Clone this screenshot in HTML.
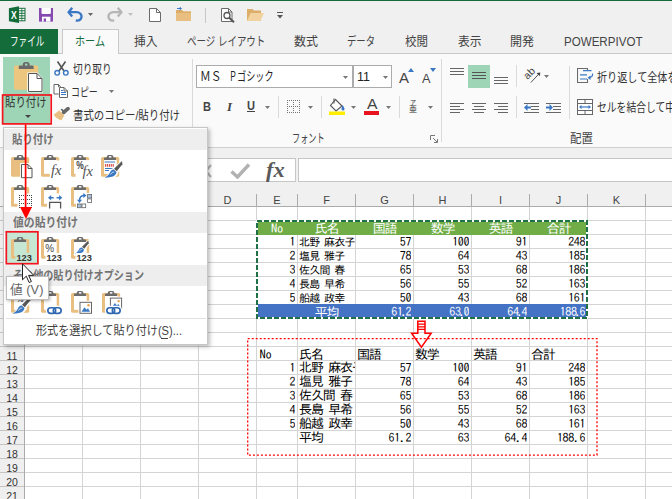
<!DOCTYPE html>
<html lang="ja"><head><meta charset="utf-8"><title>Excel</title>
<style>
*{box-sizing:border-box;margin:0;padding:0}
html,body{width:672px;height:499px;overflow:hidden;background:#fff}
body{position:relative;font-family:"Liberation Sans","Noto Sans CJK JP",sans-serif;font-size:12px;color:#444}
.a{position:absolute}
.t{position:absolute;white-space:nowrap;line-height:1}
.ui{font-family:"Liberation Sans","Noto Sans CJK JP",sans-serif;letter-spacing:-0.6px}
.cell{position:absolute;white-space:nowrap;line-height:14px;height:14px;font-family:"IPAPGothic","IPAGothic","Noto Sans CJK JP",sans-serif;font-size:12px;color:#000;overflow:hidden}
.r{text-align:right;font-family:"IPAGothic","Noto Sans CJK JP",monospace;font-size:12px;letter-spacing:-0.4px;margin-top:-1px}
.c{text-align:center}
.dot{margin:0 -1.4px}
.h{font-family:"IPAGothic","Noto Sans CJK JP",monospace;font-size:13px;letter-spacing:-1.2px}
.h.no{font-size:12.5px;letter-spacing:-0.2px}
.vl{position:absolute;width:1px;background:#d4d4d4}
.hl{position:absolute;height:1px;background:#d4d4d4}
.hd{position:absolute;font-family:"Liberation Sans",sans-serif;font-size:11px;color:#444;text-align:center;line-height:14px}
</style></head><body>

<div class="a" style="left:0;top:183px;width:672px;height:24px;background:#f0f0f0"></div>
<div class="a" style="left:0;top:207px;width:24px;height:292px;background:#efefef"></div>
<div class="hl" style="left:0;top:206px;width:672px;background:#ababab"></div>
<div class="vl" style="left:24px;top:191px;height:308px;background:#ababab"></div>
<div class="vl" style="left:82px;top:207px;height:292px"></div>
<div class="vl" style="left:82px;top:194px;height:12px;background:#ababab"></div>
<div class="vl" style="left:140px;top:207px;height:292px"></div>
<div class="vl" style="left:140px;top:194px;height:12px;background:#ababab"></div>
<div class="vl" style="left:198px;top:207px;height:292px"></div>
<div class="vl" style="left:198px;top:194px;height:12px;background:#ababab"></div>
<div class="vl" style="left:256px;top:207px;height:292px"></div>
<div class="vl" style="left:256px;top:194px;height:12px;background:#ababab"></div>
<div class="vl" style="left:297px;top:207px;height:292px"></div>
<div class="vl" style="left:297px;top:194px;height:12px;background:#ababab"></div>
<div class="vl" style="left:355px;top:207px;height:292px"></div>
<div class="vl" style="left:355px;top:194px;height:12px;background:#ababab"></div>
<div class="vl" style="left:413px;top:207px;height:292px"></div>
<div class="vl" style="left:413px;top:194px;height:12px;background:#ababab"></div>
<div class="vl" style="left:471px;top:207px;height:292px"></div>
<div class="vl" style="left:471px;top:194px;height:12px;background:#ababab"></div>
<div class="vl" style="left:529px;top:207px;height:292px"></div>
<div class="vl" style="left:529px;top:194px;height:12px;background:#ababab"></div>
<div class="vl" style="left:587px;top:207px;height:292px"></div>
<div class="vl" style="left:587px;top:194px;height:12px;background:#ababab"></div>
<div class="vl" style="left:645px;top:207px;height:292px"></div>
<div class="vl" style="left:645px;top:194px;height:12px;background:#ababab"></div>
<div class="hl" style="left:0;top:220px;width:24px;background:#c4c4c4"></div><div class="hl" style="left:25px;top:220px;width:647px"></div>
<div class="hl" style="left:0;top:234px;width:24px;background:#c4c4c4"></div><div class="hl" style="left:25px;top:234px;width:647px"></div>
<div class="hl" style="left:0;top:248px;width:24px;background:#c4c4c4"></div><div class="hl" style="left:25px;top:248px;width:647px"></div>
<div class="hl" style="left:0;top:262px;width:24px;background:#c4c4c4"></div><div class="hl" style="left:25px;top:262px;width:647px"></div>
<div class="hl" style="left:0;top:276px;width:24px;background:#c4c4c4"></div><div class="hl" style="left:25px;top:276px;width:647px"></div>
<div class="hl" style="left:0;top:290px;width:24px;background:#c4c4c4"></div><div class="hl" style="left:25px;top:290px;width:647px"></div>
<div class="hl" style="left:0;top:304px;width:24px;background:#c4c4c4"></div><div class="hl" style="left:25px;top:304px;width:647px"></div>
<div class="hl" style="left:0;top:318px;width:24px;background:#c4c4c4"></div><div class="hl" style="left:25px;top:318px;width:647px"></div>
<div class="hl" style="left:0;top:332px;width:24px;background:#c4c4c4"></div><div class="hl" style="left:25px;top:332px;width:647px"></div>
<div class="hl" style="left:0;top:346px;width:24px;background:#c4c4c4"></div><div class="hl" style="left:25px;top:346px;width:647px"></div>
<div class="hl" style="left:0;top:360px;width:24px;background:#c4c4c4"></div><div class="hl" style="left:25px;top:360px;width:647px"></div>
<div class="hl" style="left:0;top:374px;width:24px;background:#c4c4c4"></div><div class="hl" style="left:25px;top:374px;width:647px"></div>
<div class="hl" style="left:0;top:388px;width:24px;background:#c4c4c4"></div><div class="hl" style="left:25px;top:388px;width:647px"></div>
<div class="hl" style="left:0;top:402px;width:24px;background:#c4c4c4"></div><div class="hl" style="left:25px;top:402px;width:647px"></div>
<div class="hl" style="left:0;top:416px;width:24px;background:#c4c4c4"></div><div class="hl" style="left:25px;top:416px;width:647px"></div>
<div class="hl" style="left:0;top:430px;width:24px;background:#c4c4c4"></div><div class="hl" style="left:25px;top:430px;width:647px"></div>
<div class="hl" style="left:0;top:444px;width:24px;background:#c4c4c4"></div><div class="hl" style="left:25px;top:444px;width:647px"></div>
<div class="hl" style="left:0;top:458px;width:24px;background:#c4c4c4"></div><div class="hl" style="left:25px;top:458px;width:647px"></div>
<div class="hl" style="left:0;top:472px;width:24px;background:#c4c4c4"></div><div class="hl" style="left:25px;top:472px;width:647px"></div>
<div class="hl" style="left:0;top:486px;width:24px;background:#c4c4c4"></div><div class="hl" style="left:25px;top:486px;width:647px"></div>
<div class="hd" style="left:25px;top:193px;width:57px">A</div>
<div class="hd" style="left:83px;top:193px;width:57px">B</div>
<div class="hd" style="left:141px;top:193px;width:57px">C</div>
<div class="hd" style="left:199px;top:193px;width:57px">D</div>
<div class="hd" style="left:257px;top:193px;width:40px">E</div>
<div class="hd" style="left:298px;top:193px;width:57px">F</div>
<div class="hd" style="left:356px;top:193px;width:57px">G</div>
<div class="hd" style="left:414px;top:193px;width:57px">H</div>
<div class="hd" style="left:472px;top:193px;width:57px">I</div>
<div class="hd" style="left:530px;top:193px;width:57px">J</div>
<div class="hd" style="left:588px;top:193px;width:57px">K</div>
<div class="hd" style="left:0;top:348.5px;width:24px;font-size:10.5px;color:#333">11</div>
<div class="hd" style="left:0;top:362.5px;width:24px;font-size:10.5px;color:#333">12</div>
<div class="hd" style="left:0;top:376.5px;width:24px;font-size:10.5px;color:#333">13</div>
<div class="hd" style="left:0;top:390.5px;width:24px;font-size:10.5px;color:#333">14</div>
<div class="hd" style="left:0;top:404.5px;width:24px;font-size:10.5px;color:#333">15</div>
<div class="hd" style="left:0;top:418.5px;width:24px;font-size:10.5px;color:#333">16</div>
<div class="hd" style="left:0;top:432.5px;width:24px;font-size:10.5px;color:#333">17</div>
<div class="hd" style="left:0;top:446.5px;width:24px;font-size:10.5px;color:#333">18</div>
<div class="hd" style="left:0;top:460.5px;width:24px;font-size:10.5px;color:#333">19</div>
<div class="hd" style="left:0;top:474.5px;width:24px;font-size:10.5px;color:#333">20</div>
<div class="hd" style="left:0;top:488.5px;width:24px;font-size:10.5px;color:#333">21</div>
<div class="a" style="left:256px;top:220px;width:332px;height:15px;background:#70ad47"></div>
<div class="a" style="left:256px;top:304px;width:332px;height:15px;background:#4472c4"></div>
<div class="cell c h no" style="left:257px;top:221.5px;width:40px;color:#fff">No</div>
<div class="cell c h" style="left:298px;top:221.5px;width:57px;color:#fff">氏名</div>
<div class="cell c h" style="left:356px;top:221.5px;width:57px;color:#fff">国語</div>
<div class="cell c h" style="left:414px;top:221.5px;width:57px;color:#fff">数学</div>
<div class="cell c h" style="left:472px;top:221.5px;width:57px;color:#fff">英語</div>
<div class="cell c h" style="left:530px;top:221.5px;width:57px;color:#fff">合計</div>
<div class="cell r" style="left:257px;top:235px;width:38px">1</div>
<div class="cell" style="left:299px;top:235px;width:57px;font-family:IPAGothic,monospace;font-size:11px;letter-spacing:-0.8px">北野 麻衣子</div>
<div class="cell r" style="left:356px;top:235px;width:55px">57</div>
<div class="cell r" style="left:414px;top:235px;width:55px">100</div>
<div class="cell r" style="left:472px;top:235px;width:55px">91</div>
<div class="cell r" style="left:530px;top:235px;width:55px">248</div>
<div class="cell r" style="left:257px;top:249px;width:38px">2</div>
<div class="cell" style="left:299px;top:249px;width:57px;font-family:IPAGothic,monospace;font-size:11px;letter-spacing:-0.8px">塩見 雅子</div>
<div class="cell r" style="left:356px;top:249px;width:55px">78</div>
<div class="cell r" style="left:414px;top:249px;width:55px">64</div>
<div class="cell r" style="left:472px;top:249px;width:55px">43</div>
<div class="cell r" style="left:530px;top:249px;width:55px">185</div>
<div class="cell r" style="left:257px;top:263px;width:38px">3</div>
<div class="cell" style="left:299px;top:263px;width:57px;font-family:IPAGothic,monospace;font-size:11px;letter-spacing:-0.8px">佐久間 春</div>
<div class="cell r" style="left:356px;top:263px;width:55px">65</div>
<div class="cell r" style="left:414px;top:263px;width:55px">53</div>
<div class="cell r" style="left:472px;top:263px;width:55px">68</div>
<div class="cell r" style="left:530px;top:263px;width:55px">186</div>
<div class="cell r" style="left:257px;top:277px;width:38px">4</div>
<div class="cell" style="left:299px;top:277px;width:57px;font-family:IPAGothic,monospace;font-size:11px;letter-spacing:-0.8px">長島 早希</div>
<div class="cell r" style="left:356px;top:277px;width:55px">56</div>
<div class="cell r" style="left:414px;top:277px;width:55px">55</div>
<div class="cell r" style="left:472px;top:277px;width:55px">52</div>
<div class="cell r" style="left:530px;top:277px;width:55px">163</div>
<div class="cell r" style="left:257px;top:291px;width:38px">5</div>
<div class="cell" style="left:299px;top:291px;width:57px;font-family:IPAGothic,monospace;font-size:11px;letter-spacing:-0.8px">船越 政幸</div>
<div class="cell r" style="left:356px;top:291px;width:55px">50</div>
<div class="cell r" style="left:414px;top:291px;width:55px">43</div>
<div class="cell r" style="left:472px;top:291px;width:55px">68</div>
<div class="cell r" style="left:530px;top:291px;width:55px">161</div>
<div class="cell c h" style="left:298px;top:305.5px;width:57px;color:#fff">平均</div>
<div class="cell r" style="left:356px;top:305px;width:55px;color:#fff">61<span class="dot">.</span>2</div>
<div class="cell r" style="left:414px;top:305px;width:55px;color:#fff">63<span class="dot">.</span>0</div>
<div class="cell r" style="left:472px;top:305px;width:55px;color:#fff">64<span class="dot">.</span>4</div>
<div class="cell r" style="left:530px;top:305px;width:55px;color:#fff">188<span class="dot">.</span>6</div>
<svg class="a" style="left:250px;top:214px" width="345" height="112" viewBox="0 0 345 112">
<rect x="7" y="7" width="330" height="97" fill="none" stroke="#fff" stroke-width="2"/>
<rect x="7" y="7" width="330" height="97" fill="none" stroke="#1f7145" stroke-width="2" stroke-dasharray="5 2" shape-rendering="crispEdges"/>
</svg>
<div class="cell h no" style="left:259.5px;top:348px;width:43px;overflow:visible">No</div>
<div class="cell h" style="left:299px;top:348px;width:60px;overflow:visible">氏名</div>
<div class="cell h" style="left:357px;top:348px;width:60px;overflow:visible">国語</div>
<div class="cell h" style="left:415px;top:348px;width:60px;overflow:visible">数学</div>
<div class="cell h" style="left:473px;top:348px;width:60px;overflow:visible">英語</div>
<div class="cell h" style="left:531px;top:348px;width:60px;overflow:visible">合計</div>
<div class="cell r" style="left:257px;top:361px;width:38px">1</div>
<div class="cell" style="left:299px;top:360.5px;width:56px;font-family:IPAGothic,monospace;font-size:13px;letter-spacing:-1.1px">北野 麻衣子</div>
<div class="cell r" style="left:356px;top:361px;width:55px">57</div>
<div class="cell r" style="left:414px;top:361px;width:55px">100</div>
<div class="cell r" style="left:472px;top:361px;width:55px">91</div>
<div class="cell r" style="left:530px;top:361px;width:55px">248</div>
<div class="cell r" style="left:257px;top:375px;width:38px">2</div>
<div class="cell" style="left:299px;top:374.5px;width:56px;font-family:IPAGothic,monospace;font-size:13px;letter-spacing:-1.1px">塩見 雅子</div>
<div class="cell r" style="left:356px;top:375px;width:55px">78</div>
<div class="cell r" style="left:414px;top:375px;width:55px">64</div>
<div class="cell r" style="left:472px;top:375px;width:55px">43</div>
<div class="cell r" style="left:530px;top:375px;width:55px">185</div>
<div class="cell r" style="left:257px;top:389px;width:38px">3</div>
<div class="cell" style="left:299px;top:388.5px;width:56px;font-family:IPAGothic,monospace;font-size:13px;letter-spacing:-1.1px">佐久間 春</div>
<div class="cell r" style="left:356px;top:389px;width:55px">65</div>
<div class="cell r" style="left:414px;top:389px;width:55px">53</div>
<div class="cell r" style="left:472px;top:389px;width:55px">68</div>
<div class="cell r" style="left:530px;top:389px;width:55px">186</div>
<div class="cell r" style="left:257px;top:403px;width:38px">4</div>
<div class="cell" style="left:299px;top:402.5px;width:56px;font-family:IPAGothic,monospace;font-size:13px;letter-spacing:-1.1px">長島 早希</div>
<div class="cell r" style="left:356px;top:403px;width:55px">56</div>
<div class="cell r" style="left:414px;top:403px;width:55px">55</div>
<div class="cell r" style="left:472px;top:403px;width:55px">52</div>
<div class="cell r" style="left:530px;top:403px;width:55px">163</div>
<div class="cell r" style="left:257px;top:417px;width:38px">5</div>
<div class="cell" style="left:299px;top:416.5px;width:56px;font-family:IPAGothic,monospace;font-size:13px;letter-spacing:-1.1px">船越 政幸</div>
<div class="cell r" style="left:356px;top:417px;width:55px">50</div>
<div class="cell r" style="left:414px;top:417px;width:55px">43</div>
<div class="cell r" style="left:472px;top:417px;width:55px">68</div>
<div class="cell r" style="left:530px;top:417px;width:55px">161</div>
<div class="cell" style="left:299px;top:430.5px;width:56px;font-family:IPAGothic,monospace;font-size:13px;letter-spacing:-1.1px">平均</div>
<div class="cell r" style="left:356px;top:431px;width:55px">61.2</div>
<div class="cell r" style="left:414px;top:431px;width:55px">63</div>
<div class="cell r" style="left:472px;top:431px;width:55px">64.4</div>
<div class="cell r" style="left:530px;top:431px;width:55px">188.6</div>
<svg class="a" style="left:240px;top:330px" width="370" height="135" viewBox="0 0 370 135">
<rect x="7.700" y="8.600" width="349.300" height="116.600" fill="none" stroke="#f00" stroke-width="1.300" stroke-dasharray="2 2"/>
</svg>
<svg class="a" style="left:408px;top:319px" width="28" height="30" viewBox="0 0 28 30">
<path d="M9.800 2.200h7.200v12h6.200L13.400 28.200L3.600 14.200h6.200z" fill="none" stroke="#f00" stroke-width="1.500" stroke-linejoin="miter"/>
<path d="M9.800 5.200h7.200M9.800 7.900h7.200M9.800 10.300h7.200" stroke="#f00" stroke-width="1.300"/>
</svg>
<div class="a" style="left:0;top:0;width:672px;height:54px;background:#f0f0f0"></div>
<div class="a" style="left:0;top:0;width:672px;height:1px;background:#146c3b"></div>
<div class="a" style="left:0;top:54px;width:672px;height:93px;background:#fafafa"></div>
<div class="a" style="left:0;top:147px;width:672px;height:1px;background:#d0d0d0"></div>
<div class="a" style="left:0;top:148px;width:672px;height:43px;background:#f0f0f0"></div>
<div class="a" style="left:58px;top:53px;width:614px;height:1px;background:#c9c9c9"></div>
<div class="a" style="left:0;top:29px;width:58px;height:25px;background:#146c3b"></div>
<div class="a" style="left:62px;top:29px;width:57px;height:25px;background:#fafafa;border:1px solid #c9c9c9;border-bottom:none"></div>
<div class="t" style='left:10.4px;top:33.8px;font-size:12.5px;line-height:16.5px;color:#fff;font-weight:normal;font-family:"Liberation Sans","Noto Sans CJK JP",sans-serif;transform:scaleX(0.688);transform-origin:0 50%;'>ファイル</div>
<div class="t" style='left:74.8px;top:33.8px;font-size:12.5px;line-height:16.5px;color:#146c3b;font-weight:normal;font-family:"Liberation Sans","Noto Sans CJK JP",sans-serif;transform:scaleX(0.808);transform-origin:0 50%;'>ホーム</div>
<div class="t" style='left:133.8px;top:33.8px;font-size:12.5px;line-height:16.5px;color:#444;font-weight:normal;font-family:"Liberation Sans","Noto Sans CJK JP",sans-serif;transform:scaleX(0.939);transform-origin:0 50%;'>挿入</div>
<div class="t" style='left:187px;top:33.8px;font-size:12.5px;line-height:16.5px;color:#444;font-weight:normal;font-family:"Liberation Sans","Noto Sans CJK JP",sans-serif;transform:scaleX(0.759);transform-origin:0 50%;'>ページ レイアウト</div>
<div class="t" style='left:294px;top:33.8px;font-size:12.5px;line-height:16.5px;color:#444;font-weight:normal;font-family:"Liberation Sans","Noto Sans CJK JP",sans-serif;transform:scaleX(0.959);transform-origin:0 50%;'>数式</div>
<div class="t" style='left:347px;top:33.8px;font-size:12.5px;line-height:16.5px;color:#444;font-weight:normal;font-family:"Liberation Sans","Noto Sans CJK JP",sans-serif;transform:scaleX(0.746);transform-origin:0 50%;'>データ</div>
<div class="t" style='left:404.5px;top:33.8px;font-size:12.5px;line-height:16.5px;color:#444;font-weight:normal;font-family:"Liberation Sans","Noto Sans CJK JP",sans-serif;transform:scaleX(0.919);transform-origin:0 50%;'>校閲</div>
<div class="t" style='left:457.5px;top:33.8px;font-size:12.5px;line-height:16.5px;color:#444;font-weight:normal;font-family:"Liberation Sans","Noto Sans CJK JP",sans-serif;transform:scaleX(0.939);transform-origin:0 50%;'>表示</div>
<div class="t" style='left:510px;top:33.8px;font-size:12.5px;line-height:16.5px;color:#444;font-weight:normal;font-family:"Liberation Sans","Noto Sans CJK JP",sans-serif;transform:scaleX(0.959);transform-origin:0 50%;'>開発</div>
<div class="t" style='left:563.5px;top:33.8px;font-size:12.5px;line-height:16.5px;color:#444;font-weight:normal;font-family:"Liberation Sans","Noto Sans CJK JP",sans-serif;transform:scaleX(0.926);transform-origin:0 50%;'>POWERPIVOT</div>
<svg class="a" style="left:8px;top:6px" width="18" height="18" viewBox="0 0 18 18">
<rect x="10" y="2.300" width="7" height="12.500" fill="#fff" stroke="#146c3b" stroke-width="1"/>
<path d="M10 4.800h7M10 7.300h7M10 9.800h7M10 12.300h7" stroke="#146c3b" stroke-width="1"/>
<path d="M13.800 2.300v12.500" stroke="#146c3b" stroke-width="0.800"/>
<path d="M0.900 2.200L11 0.300v16.800L0.900 15.200z" fill="#146c3b"/>
<text x="3" y="13" font-family="Liberation Sans,sans-serif" font-weight="bold" font-size="11.500" fill="#fff" textLength="5.800" lengthAdjust="spacingAndGlyphs">X</text></svg><svg class="a" style="left:39px;top:8px" width="14" height="14" viewBox="0 0 14 14">
<path d="M0 0h14v13.600h-14z" fill="#8549b0"/>
<path d="M2.500 0h9.400v5a1 1 0 0 1-1 1h-7.400a1 1 0 0 1-1-1z" fill="#fff"/>
<rect x="3" y="8.700" width="8.400" height="4.900" fill="#fff"/>
<rect x="4.700" y="10.500" width="2.300" height="3.100" fill="#8549b0"/></svg><svg class="a" style="left:67px;top:7px" width="16" height="15" viewBox="0 0 16 15"><path d="M5.200 0.800L1.600 5.200L5.200 9.600" fill="none" stroke="#3b78c3" stroke-width="2.300" stroke-linejoin="miter"/><path d="M2 5.200H9.400C13 5.200 15 7.800 14.400 10.400C13.800 12.800 11.600 13.900 8.800 13.500" fill="none" stroke="#3b78c3" stroke-width="2.300"/></svg><svg class="a" style="left:88px;top:13px" width="5" height="3" viewBox="0 0 5 3"><path d="M0 0h5l-2.5 3z" fill="#666"/></svg><svg class="a" style="left:107px;top:7px" width="16" height="15" viewBox="0 0 16 15"><g transform="translate(16,0) scale(-1,1)"><path d="M5.200 0.800L1.600 5.200L5.200 9.600" fill="none" stroke="#b5b5b5" stroke-width="2.300" stroke-linejoin="miter"/><path d="M2 5.200H9.400C13 5.200 15 7.800 14.400 10.400C13.800 12.800 11.600 13.900 8.800 13.500" fill="none" stroke="#b5b5b5" stroke-width="2.300"/></g></svg><svg class="a" style="left:128px;top:13px" width="5" height="3" viewBox="0 0 5 3"><path d="M0 0h5l-2.5 3z" fill="#c0c0c0"/></svg><svg class="a" style="left:149px;top:8px" width="12" height="14" viewBox="0 0 12 14">
<path d="M0.5 0.5h7l4 4v9h-11z" fill="#fff" stroke="#6a6a6a"/>
<path d="M7.5 0.5v4h4" fill="none" stroke="#6a6a6a"/></svg><svg class="a" style="left:176px;top:7px" width="16" height="14" viewBox="0 0 16 14">
<path d="M0 3h6l1.5 1.5H15V14H0z" fill="#e8bf80"/>
<path d="M0 3h6l1.5 1.5H15V6H0z" fill="#dcae6a"/>
<path d="M1 1.5h4M3.5 0l2 1.5-2 1.5" fill="none" stroke="#3b78c3" stroke-width="1"/></svg><div class="a" style="left:205px;top:8px;width:1px;height:15px;background:#c6c6c6"></div><svg class="a" style="left:221px;top:8px" width="15" height="15" viewBox="0 0 15 15">
<path d="M0.5 0.5h7l3.5 3.5v9.5h-10.5z" fill="#fff" stroke="#6a6a6a"/>
<path d="M7.5 0.5v3.5h3.5" fill="none" stroke="#6a6a6a"/>
<circle cx="6" cy="7.5" r="3" fill="#fff" stroke="#555" stroke-width="1.3"/>
<path d="M8.2 9.8L13 14.2" stroke="#555" stroke-width="2"/></svg><svg class="a" style="left:247px;top:9px" width="17" height="12" viewBox="0 0 17 12">
<path d="M0 0h5.5l1.5 1.5H14V12H0z" fill="#dcae6a"/>
<path d="M3.5 4H17L13.5 12H0z" fill="#f2d29f"/></svg><svg class="a" style="left:277px;top:12px" width="6" height="7" viewBox="0 0 6 7"><path d="M0 0.5h6" stroke="#555" stroke-width="1"/><path d="M0 3h6l-3 3.5z" fill="#555"/></svg>
<div class="a" style="left:3px;top:57px;width:47px;height:67px;background:#9fd5b7"></div><svg class="a" style="left:14px;top:61px" width="30" height="32" viewBox="0 0 30 32">
<rect x="0" y="4.500" width="24.200" height="24.300" rx="1.800" fill="#ecc57e"/>
<path d="M4.800 8V5.500a1 1 0 0 1 1-1h3V3.500a2.500 2.500 0 0 1 2.500-2.500h1.800a2.500 2.500 0 0 1 2.500 2.500v1h3a1 1 0 0 1 1 1V8z" fill="#6a6a6a"/>
<rect x="11" y="2.600" width="2.400" height="2" fill="#9fd5b7"/>
<path d="M13.300 11.500h10l5.500 5.500v14.500h-15.500z" fill="#fff"/>
<path d="M14.500 12.500h8.500l5 5v13h-13.500z" fill="#fff" stroke="#555"/>
<path d="M23 12.500v5h5" fill="none" stroke="#555"/></svg><div class="t" style='left:5.4px;top:95.2px;font-size:12.5px;line-height:16.5px;color:#333;font-weight:normal;font-family:"Liberation Sans","Noto Sans CJK JP",sans-serif;transform:scaleX(0.832);transform-origin:0 50%;'>貼り付け</div><svg class="a" style="left:25px;top:115px" width="6" height="3" viewBox="0 0 6 3"><path d="M0 0h6l-3.0 3z" fill="#444"/></svg><svg class="a" style="left:0px;top:92px" width="54" height="35" viewBox="0 0 54 35"><rect x="2.600" y="3" width="48.600" height="28.900" fill="none" stroke="#f2141e" stroke-width="1.700"/></svg><svg class="a" style="left:54px;top:61px" width="15" height="15" viewBox="0 0 15 15">
<path d="M3.5 0.5L10 10M11.500 0.500L5 10" stroke="#555" stroke-width="1.600" fill="none"/>
<circle cx="3.200" cy="11.800" r="2.300" fill="none" stroke="#3b78c3" stroke-width="1.400"/>
<circle cx="11.800" cy="11.800" r="2.300" fill="none" stroke="#3b78c3" stroke-width="1.400"/></svg><div class="t" style='left:73px;top:62.0px;font-size:12.5px;line-height:16.5px;color:#333;font-weight:normal;font-family:"Liberation Sans","Noto Sans CJK JP",sans-serif;transform:scaleX(0.772);transform-origin:0 50%;'>切り取り</div><svg class="a" style="left:53px;top:84px" width="16" height="14" viewBox="0 0 16 14">
<path d="M1 0.500h4.500l2.500 2.500v7h-7z" fill="#fff" stroke="#666"/>
<path d="M5.500 0.500v2.500h2.500" fill="none" stroke="#666"/>
<path d="M5.800 2.800h5.200l4 4v7.200h-9.200z" fill="#fff"/>
<path d="M6.500 3.500h4.500l3.500 3.500v6.500h-8z" fill="#fff" stroke="#666"/>
<path d="M11 3.500v3.500h3.500" fill="none" stroke="#666"/>
<path d="M8 8.500h5M8 10.500h5M8 6.500h2" stroke="#3b78c3" stroke-width="1"/></svg><div class="t" style='left:71.4px;top:85.2px;font-size:12.5px;line-height:16.5px;color:#333;font-weight:normal;font-family:"Liberation Sans","Noto Sans CJK JP",sans-serif;transform:scaleX(0.714);transform-origin:0 50%;'>コピー</div><svg class="a" style="left:108.5px;top:89.5px" width="5" height="3" viewBox="0 0 5 3"><path d="M0 0h5l-2.5 3z" fill="#777"/></svg><svg class="a" style="left:53px;top:107px" width="17" height="14" viewBox="0 0 17 14">
<path d="M0.700 7.700L7 2.800L11.800 7.400L8.500 13.200C5 12.500 2.500 10.500 0.700 7.700z" fill="#e8bf80"/>
<path d="M7.200 2.600L12 7.300" stroke="#fff" stroke-width="2.400"/>
<path d="M15 1.600L10.600 5.400" stroke="#666" stroke-width="3.600" stroke-linecap="round"/>
<path d="M8.300 2.200L12.400 6.300" stroke="#666" stroke-width="1.800"/></svg><div class="t" style='left:73px;top:107.5px;font-size:12.5px;line-height:16.5px;color:#333;font-weight:normal;font-family:"Liberation Sans","Noto Sans CJK JP",sans-serif;transform:scaleX(0.833);transform-origin:0 50%;'>書式のコピー/貼り付け</div><div class="a" style="left:192px;top:59px;width:1px;height:83px;background:#dadada"></div>
<div class="a" style="left:196px;top:65px;width:157px;height:23px;background:#fff;border:1px solid #ababab"></div><div class="a" style="left:353px;top:65px;width:39px;height:23px;background:#fff;border:1px solid #ababab"></div><div class="t" style="left:199.500px;top:68.500px;line-height:17px;font-size:12.500px;color:#222"><span style="display:inline-block;width:21.5px;white-space:nowrap;vertical-align:top"><span style='display:inline-block;transform:scaleX(0.859);transform-origin:0 50%;font-family:"Liberation Sans","Noto Sans CJK JP",sans-serif;font-size:12.5px;font-weight:normal;'>ＭＳ</span></span><span style="display:inline-block;width:7.500px"> </span><span style="display:inline-block;width:8px;white-space:nowrap;vertical-align:top"><span style='display:inline-block;transform:scaleX(0.639);transform-origin:0 50%;font-family:"Liberation Sans","Noto Sans CJK JP",sans-serif;font-size:12.5px;font-weight:normal;'>Ｐ</span></span><span style="display:inline-block;width:36.5px;white-space:nowrap;vertical-align:top"><span style='display:inline-block;transform:scaleX(0.730);transform-origin:0 50%;font-family:"Liberation Sans","Noto Sans CJK JP",sans-serif;font-size:12.5px;font-weight:normal;'>ゴシック</span></span></div><svg class="a" style="left:342.5px;top:75.5px" width="5" height="3" viewBox="0 0 5 3"><path d="M0 0h5l-2.5 3z" fill="#777"/></svg><div class="t" style='left:357px;top:68.8px;font-size:12.5px;line-height:16.5px;color:#222;font-weight:normal;font-family:"Liberation Sans","Noto Sans CJK JP",sans-serif;transform:scaleX(1.001);transform-origin:0 50%;'>11</div><svg class="a" style="left:383px;top:75.5px" width="5" height="3" viewBox="0 0 5 3"><path d="M0 0h5l-2.5 3z" fill="#777"/></svg><div class="t" style='left:399px;top:68.0px;font-size:15px;line-height:19px;color:#444;font-weight:normal;font-family:"Liberation Sans","Noto Sans CJK JP",sans-serif;transform:scaleX(0.998);transform-origin:0 50%;'>A</div><svg class="a" style="left:408px;top:68px" width="6" height="4" viewBox="0 0 6 4"><path d="M0 4h6l-3-4z" fill="#3b78c3"/></svg><div class="t" style='left:421.5px;top:69.5px;font-size:13px;line-height:17px;color:#444;font-weight:normal;font-family:"Liberation Sans","Noto Sans CJK JP",sans-serif;transform:scaleX(0.980);transform-origin:0 50%;'>A</div><svg class="a" style="left:429.5px;top:68px" width="6" height="4" viewBox="0 0 6 4"><path d="M0 0h6l-3 4z" fill="#3b78c3"/></svg><div class="t" style='left:202.5px;top:98.5px;font-size:12px;line-height:16px;color:#444;font-weight:bold;font-family:"Liberation Sans","Noto Sans CJK JP",sans-serif;transform:scaleX(0.923);transform-origin:0 50%;'>B</div><div class="t" style='left:226.5px;top:98.5px;font-size:12px;line-height:16px;color:#444;font-weight:bold;font-family:"Liberation Serif",serif;transform:scaleX(1.070);transform-origin:0 50%;font-style:italic;'>I</div><div class="t" style='left:246.5px;top:98.0px;font-size:12px;line-height:16px;color:#444;font-weight:bold;font-family:"Liberation Sans","Noto Sans CJK JP",sans-serif;transform:scaleX(0.923);transform-origin:0 50%;text-decoration:underline;'>U</div><svg class="a" style="left:265px;top:105.5px" width="5" height="3" viewBox="0 0 5 3"><path d="M0 0h5l-2.5 3z" fill="#777"/></svg><div class="a" style="left:278px;top:96px;width:1px;height:22px;background:#dadada"></div><svg class="a" style="left:287px;top:100px" width="13" height="13" viewBox="0 0 13 13"><rect x="0" y="0" width="1" height="1" fill="#777"/><rect x="0" y="0" width="1" height="1" fill="#777"/><rect x="0" y="6" width="1" height="1" fill="#777"/><rect x="6" y="0" width="1" height="1" fill="#777"/><rect x="0" y="12" width="1" height="1" fill="#777"/><rect x="12" y="0" width="1" height="1" fill="#777"/><rect x="2" y="0" width="1" height="1" fill="#777"/><rect x="0" y="2" width="1" height="1" fill="#777"/><rect x="2" y="6" width="1" height="1" fill="#777"/><rect x="6" y="2" width="1" height="1" fill="#777"/><rect x="2" y="12" width="1" height="1" fill="#777"/><rect x="12" y="2" width="1" height="1" fill="#777"/><rect x="4" y="0" width="1" height="1" fill="#777"/><rect x="0" y="4" width="1" height="1" fill="#777"/><rect x="4" y="6" width="1" height="1" fill="#777"/><rect x="6" y="4" width="1" height="1" fill="#777"/><rect x="4" y="12" width="1" height="1" fill="#777"/><rect x="12" y="4" width="1" height="1" fill="#777"/><rect x="6" y="0" width="1" height="1" fill="#777"/><rect x="0" y="6" width="1" height="1" fill="#777"/><rect x="6" y="6" width="1" height="1" fill="#777"/><rect x="6" y="6" width="1" height="1" fill="#777"/><rect x="6" y="12" width="1" height="1" fill="#777"/><rect x="12" y="6" width="1" height="1" fill="#777"/><rect x="8" y="0" width="1" height="1" fill="#777"/><rect x="0" y="8" width="1" height="1" fill="#777"/><rect x="8" y="6" width="1" height="1" fill="#777"/><rect x="6" y="8" width="1" height="1" fill="#777"/><rect x="8" y="12" width="1" height="1" fill="#777"/><rect x="12" y="8" width="1" height="1" fill="#777"/><rect x="10" y="0" width="1" height="1" fill="#777"/><rect x="0" y="10" width="1" height="1" fill="#777"/><rect x="10" y="6" width="1" height="1" fill="#777"/><rect x="6" y="10" width="1" height="1" fill="#777"/><rect x="10" y="12" width="1" height="1" fill="#777"/><rect x="12" y="10" width="1" height="1" fill="#777"/><rect x="12" y="0" width="1" height="1" fill="#777"/><rect x="0" y="12" width="1" height="1" fill="#777"/><rect x="12" y="6" width="1" height="1" fill="#777"/><rect x="6" y="12" width="1" height="1" fill="#777"/><rect x="12" y="12" width="1" height="1" fill="#777"/><rect x="12" y="12" width="1" height="1" fill="#777"/></svg><svg class="a" style="left:307.5px;top:105.5px" width="5" height="3" viewBox="0 0 5 3"><path d="M0 0h5l-2.5 3z" fill="#777"/></svg><div class="a" style="left:321px;top:96px;width:1px;height:22px;background:#dadada"></div><svg class="a" style="left:329px;top:98px" width="17" height="17" viewBox="0 0 17 17">
<path d="M6.500 1.500L13 8L7 13L1.500 7.500z" fill="#fff" stroke="#555" stroke-width="1.100"/>
<path d="M5 0.500v5" stroke="#555" stroke-width="1.100"/>
<path d="M13.500 7c1.500 2 2 3 2 4a1.500 1.500 0 0 1-3 0c0-1 0.500-2 1-4z" fill="#3b78c3"/>
<rect x="0" y="13.500" width="16" height="3.500" fill="#ffee00"/></svg><svg class="a" style="left:351px;top:105.5px" width="5" height="3" viewBox="0 0 5 3"><path d="M0 0h5l-2.5 3z" fill="#777"/></svg><div class="t" style='left:366.5px;top:95.0px;font-size:14px;line-height:18px;color:#444;font-weight:normal;font-family:"Liberation Sans","Noto Sans CJK JP",sans-serif;transform:scaleX(1.124);transform-origin:0 50%;'>A</div><div class="a" style="left:364px;top:111px;width:15px;height:4px;background:#e8131f"></div><svg class="a" style="left:385.5px;top:105.5px" width="5" height="3" viewBox="0 0 5 3"><path d="M0 0h5l-2.5 3z" fill="#777"/></svg><div class="a" style="left:399px;top:96px;width:1px;height:22px;background:#dadada"></div><div class="t" style='left:410px;top:96.5px;font-size:7px;line-height:11px;color:#333;font-weight:normal;font-family:"Liberation Sans","Noto Sans CJK JP",sans-serif;transform:scaleX(0.857);transform-origin:0 50%;'>ア</div><div class="t" style='left:409px;top:104.0px;font-size:8px;line-height:12px;color:#333;font-weight:normal;font-family:"Liberation Sans","Noto Sans CJK JP",sans-serif;transform:scaleX(1.000);transform-origin:0 50%;'>亜</div><svg class="a" style="left:428px;top:105.5px" width="5" height="3" viewBox="0 0 5 3"><path d="M0 0h5l-2.5 3z" fill="#777"/></svg><div class="t" style='left:292px;top:131.4px;font-size:12.5px;line-height:16.5px;color:#444;font-weight:normal;font-family:"Liberation Sans","Noto Sans CJK JP",sans-serif;transform:scaleX(0.652);transform-origin:0 50%;'>フォント</div><svg class="a" style="left:430px;top:135px" width="8" height="8" viewBox="0 0 8 8"><path d="M0.500 5V0.500H5" fill="none" stroke="#777"/><path d="M3 3l4 4M7.500 4v3.500H4" fill="none" stroke="#777"/></svg><div class="a" style="left:441px;top:59px;width:1px;height:83px;background:#dadada"></div>
<div class="a" style="left:450px;top:68px;width:14px;height:1px;background:#666"></div><div class="a" style="left:450px;top:71px;width:14px;height:1px;background:#666"></div><div class="a" style="left:450px;top:74px;width:14px;height:1px;background:#666"></div><div class="a" style="left:468px;top:65px;width:22px;height:23px;background:#9fd5b7"></div><div class="a" style="left:472px;top:72px;width:14px;height:1px;background:#555"></div><div class="a" style="left:472px;top:75px;width:14px;height:1px;background:#555"></div><div class="a" style="left:472px;top:78px;width:14px;height:1px;background:#555"></div><div class="a" style="left:494px;top:77px;width:14px;height:1px;background:#666"></div><div class="a" style="left:494px;top:80px;width:14px;height:1px;background:#666"></div><div class="a" style="left:494px;top:83px;width:14px;height:1px;background:#666"></div><div class="a" style="left:516px;top:65px;width:1px;height:22px;background:#dadada"></div><div class="a" style="left:516px;top:96px;width:1px;height:22px;background:#dadada"></div><svg class="a" style="left:522px;top:64px" width="20" height="22" viewBox="0 0 20 22">
<text x="0" y="0" font-family="Liberation Sans,sans-serif" font-size="10.500" fill="#444" transform="translate(5.500 16) rotate(-45)">ab</text>
<path d="M8.800 18.600L17 9.800" stroke="#555" stroke-width="1"/><path d="M18.300 8.400L17.800 12.200L14.500 9z" fill="#444"/></svg><svg class="a" style="left:544px;top:74.5px" width="5" height="3" viewBox="0 0 5 3"><path d="M0 0h5l-2.5 3z" fill="#777"/></svg><div class="a" style="left:569px;top:66px;width:1px;height:53px;background:#dadada"></div><div class="a" style="left:450px;top:103px;width:14px;height:1px;background:#666"></div><div class="a" style="left:450px;top:106px;width:10px;height:1px;background:#666"></div><div class="a" style="left:450px;top:109px;width:14px;height:1px;background:#666"></div><div class="a" style="left:450px;top:112px;width:10px;height:1px;background:#666"></div><div class="a" style="left:472.0px;top:103px;width:14px;height:1px;background:#666"></div><div class="a" style="left:474.0px;top:106px;width:10px;height:1px;background:#666"></div><div class="a" style="left:472.0px;top:109px;width:14px;height:1px;background:#666"></div><div class="a" style="left:474.0px;top:112px;width:10px;height:1px;background:#666"></div><div class="a" style="left:494px;top:103px;width:14px;height:1px;background:#666"></div><div class="a" style="left:498px;top:106px;width:10px;height:1px;background:#666"></div><div class="a" style="left:494px;top:109px;width:14px;height:1px;background:#666"></div><div class="a" style="left:498px;top:112px;width:10px;height:1px;background:#666"></div><div class="a" style="left:524px;top:103px;width:15px;height:1px;background:#666"></div><div class="a" style="left:524px;top:112px;width:15px;height:1px;background:#666"></div><div class="a" style="left:531px;top:106px;width:8px;height:1px;background:#666"></div><div class="a" style="left:531px;top:109px;width:8px;height:1px;background:#666"></div><svg class="a" style="left:524px;top:104px" width="7" height="7" viewBox="0 0 7 7"><path d="M0 3.500L3.500 0v2.500h3.500v2h-3.500V7z" fill="#3b78c3"/></svg><div class="a" style="left:546px;top:103px;width:15px;height:1px;background:#666"></div><div class="a" style="left:546px;top:112px;width:15px;height:1px;background:#666"></div><div class="a" style="left:553px;top:106px;width:8px;height:1px;background:#666"></div><div class="a" style="left:553px;top:109px;width:8px;height:1px;background:#666"></div><svg class="a" style="left:546px;top:104px" width="7" height="7" viewBox="0 0 7 7"><path d="M7 3.500L3.500 0v2.500H0v2h3.500V7z" fill="#3b78c3"/></svg><svg class="a" style="left:577px;top:68px" width="17" height="16" viewBox="0 0 17 16">
<path d="M10.500 2.500V0.500H0.500v14h10V11" fill="none" stroke="#6a6a6a" stroke-width="1.100"/>
<path d="M6 2.700h8.500M3 6.900h7M3 11h7" stroke="#3b78c3" stroke-width="1.200"/>
<path d="M15.500 5.500c0.500 2.500-1 4-3.500 4.300" fill="none" stroke="#3b78c3" stroke-width="1.200"/>
<path d="M10.500 9.800l3-2.200v4.400z" fill="#3b78c3"/></svg><div class="t" style='left:596.6px;top:69.8px;font-size:12.5px;line-height:16.5px;color:#333;font-weight:normal;font-family:"Liberation Sans","Noto Sans CJK JP",sans-serif;transform:scaleX(0.809);transform-origin:0 50%;'>折り返して全体を表示する</div><svg class="a" style="left:577px;top:99px" width="16" height="16" viewBox="0 0 16 16">
<rect x="0.500" y="0.500" width="15" height="15" fill="#fff" stroke="#666"/>
<path d="M0.500 4.500h15M0.500 11.500h15M8 0.500v4M8 11.500v4" stroke="#666"/>
<path d="M3 8h10" stroke="#3b78c3" stroke-width="1.200"/>
<path d="M2 8l2.500-2v4zM14 8l-2.500-2v4z" fill="#3b78c3"/></svg><div class="t" style='left:596.6px;top:99.8px;font-size:12.5px;line-height:16.5px;color:#333;font-weight:normal;font-family:"Liberation Sans","Noto Sans CJK JP",sans-serif;transform:scaleX(0.784);transform-origin:0 50%;'>セルを結合して中央揃え</div><div class="t" style='left:569.7px;top:131.4px;font-size:12.5px;line-height:16.5px;color:#444;font-weight:normal;font-family:"Liberation Sans","Noto Sans CJK JP",sans-serif;transform:scaleX(0.919);transform-origin:0 50%;'>配置</div>
<div class="a" style="left:150px;top:158px;width:146px;height:24px;background:#fff;border:1px solid #c6c6c6"></div><div class="a" style="left:298px;top:158px;width:380px;height:24px;background:#fff;border:1px solid #c6c6c6"></div><svg class="a" style="left:200px;top:164px" width="12" height="14" viewBox="0 0 12 14"><path d="M1 1l10 12M11 1L1 13" stroke="#b5b5b5" stroke-width="2.200"/></svg><svg class="a" style="left:230px;top:162px" width="21" height="17" viewBox="0 0 21 17"><path d="M1.500 9.500L7.500 15L19 2.500" fill="none" stroke="#b2b2b2" stroke-width="3.400"/></svg><div class="t" style='left:266.2px;top:156.5px;font-size:22px;line-height:26px;color:#595959;font-weight:bold;font-family:"Liberation Serif",serif;transform:scaleX(1.015);transform-origin:0 50%;font-style:italic;'>fx</div>
<div class="a" style="left:3px;top:127px;width:205px;height:218px;background:#fff;border:1px solid #c6c6c6;box-shadow:2px 2px 4px rgba(0,0,0,0.25)"></div><div class="a" style="left:4px;top:129px;width:203px;height:21px;background:#eeeeee"></div><div class="a" style="left:4px;top:212px;width:203px;height:21px;background:#eeeeee"></div><div class="a" style="left:4px;top:265px;width:203px;height:21px;background:#eeeeee"></div><div class="t" style='left:12.4px;top:132.3px;font-size:12.5px;line-height:16.5px;color:#737373;font-weight:bold;font-family:"Liberation Sans","Noto Sans CJK JP",sans-serif;transform:scaleX(0.832);transform-origin:0 50%;'>貼り付け</div><div class="t" style='left:13px;top:214.9px;font-size:12.5px;line-height:16.5px;color:#737373;font-weight:bold;font-family:"Liberation Sans","Noto Sans CJK JP",sans-serif;transform:scaleX(0.866);transform-origin:0 50%;'>値の貼り付け</div><div class="t" style='left:13px;top:268.1px;font-size:12.5px;line-height:16.5px;color:#737373;font-weight:bold;font-family:"Liberation Sans","Noto Sans CJK JP",sans-serif;transform:scaleX(0.806);transform-origin:0 50%;'>その他の貼り付けオプション</div><svg class="a" style="left:11px;top:155px" width="24" height="25" viewBox="0 0 24 25"><rect x="0" y="2.100" width="18.200" height="19.700" rx="1.500" fill="#e8bf80"/><path d="M3 5V3.600a1 1 0 0 1 1-1h1.700V2a2 2 0 0 1 2-2h2.700a2 2 0 0 1 2 2v0.600h1.700a1 1 0 0 1 1 1V5z" fill="#6a6a6a"/><rect x="7.900" y="1.100" width="2.500" height="1.500" fill="#fff"/><path d="M9.200 8h8.500l4.500 4.500v11.200h-13z" fill="#fff"/><path d="M10.500 9.500h6.500l4 4v9.200h-10.500z" fill="#fff" stroke="#555"/><path d="M17 9.500v4h4" fill="none" stroke="#555"/></svg><svg class="a" style="left:41px;top:155px" width="24" height="25" viewBox="0 0 24 25"><rect x="0" y="2.100" width="18.200" height="19.700" rx="1.500" fill="#e8bf80"/><rect x="3" y="4.500" width="12.700" height="14.300" fill="#fff"/><path d="M3 5V3.600a1 1 0 0 1 1-1h1.700V2a2 2 0 0 1 2-2h2.700a2 2 0 0 1 2 2v0.600h1.700a1 1 0 0 1 1 1V5z" fill="#6a6a6a"/><rect x="7.900" y="1.100" width="2.500" height="1.500" fill="#fff"/><rect x="8.8" y="5.5" width="15" height="19" fill="#fff"/><text x="10" y="19.5" font-family="Liberation Serif,serif" font-style="italic" font-size="15.5" fill="#555" textLength="10.500" lengthAdjust="spacingAndGlyphs">fx</text></svg><svg class="a" style="left:71px;top:155px" width="24" height="25" viewBox="0 0 24 25"><rect x="0" y="2.100" width="18.200" height="19.700" rx="1.500" fill="#e8bf80"/><rect x="3" y="4.500" width="12.700" height="14.300" fill="#fff"/><path d="M3 5V3.600a1 1 0 0 1 1-1h1.700V2a2 2 0 0 1 2-2h2.700a2 2 0 0 1 2 2v0.600h1.700a1 1 0 0 1 1 1V5z" fill="#6a6a6a"/><rect x="7.900" y="1.100" width="2.500" height="1.500" fill="#fff"/><rect x="4.5" y="5.2" width="19" height="19" fill="#fff"/><text x="5.300" y="14.200" font-family="Liberation Sans,sans-serif" font-weight="bold" font-size="10" fill="#444" textLength="7.500" lengthAdjust="spacingAndGlyphs">%</text><text x="11.5" y="20.5" font-family="Liberation Serif,serif" font-style="italic" font-size="15.5" fill="#555" textLength="10.500" lengthAdjust="spacingAndGlyphs">fx</text></svg><svg class="a" style="left:101px;top:155px" width="24" height="25" viewBox="0 0 24 25"><rect x="0" y="2.100" width="18.200" height="19.700" rx="1.500" fill="#e8bf80"/><rect x="3" y="4.500" width="12.700" height="14.300" fill="#fff"/><path d="M3 5V3.600a1 1 0 0 1 1-1h1.700V2a2 2 0 0 1 2-2h2.700a2 2 0 0 1 2 2v0.600h1.700a1 1 0 0 1 1 1V5z" fill="#6a6a6a"/><rect x="7.900" y="1.100" width="2.500" height="1.500" fill="#fff"/><path d="M3.500 7h10.500M4 13.500h8M4 15.500h4" stroke="#3b78c3" stroke-width="1"/>
<path d="M4 10.400h9.500" stroke="#d9534f" stroke-width="2.600" stroke-dasharray="1.200 0.700"/><g transform="translate(0,0) scale(1)"><path d="M21.500 4.500L23 9.500L17 17.500C17 22 11 24.200 1.500 23.700C6 21.500 7 19 8 16.500C9 14.500 10.500 13.500 12.500 13z" fill="#fff"/>
<path d="M21 6L21.400 9.300L15.800 16.300L13 13.800z" fill="#595959"/>
<path d="M12.800 14.600L15.400 17C15.500 20.500 11.500 22.700 3.500 22.700C7 21 8.200 19 9.200 17C10 15.300 11.300 14.400 12.800 14.600z" fill="#3b78c3"/>
<path d="M9.500 19.500c1-1.800 2.200-2.600 3.600-2.400" fill="none" stroke="#cfe0f3" stroke-width="1"/></g></svg><svg class="a" style="left:11px;top:185px" width="24" height="25" viewBox="0 0 24 25"><rect x="0" y="2.100" width="18.200" height="19.700" rx="1.500" fill="#e8bf80"/><rect x="3" y="4.500" width="12.700" height="14.300" fill="#fff"/><path d="M3 5V3.600a1 1 0 0 1 1-1h1.700V2a2 2 0 0 1 2-2h2.700a2 2 0 0 1 2 2v0.600h1.700a1 1 0 0 1 1 1V5z" fill="#6a6a6a"/><rect x="7.900" y="1.100" width="2.500" height="1.500" fill="#fff"/><rect x="6.5" y="8.5" width="16" height="16" fill="#fff"/><rect x="8" y="10" width="1" height="1" fill="#444"/><rect x="10" y="10" width="1" height="1" fill="#444"/><rect x="12" y="10" width="1" height="1" fill="#444"/><rect x="14" y="10" width="1" height="1" fill="#444"/><rect x="16" y="10" width="1" height="1" fill="#444"/><rect x="18" y="10" width="1" height="1" fill="#444"/><rect x="20" y="10" width="1" height="1" fill="#444"/><rect x="8" y="14" width="1" height="1" fill="#444"/><rect x="10" y="14" width="1" height="1" fill="#444"/><rect x="12" y="14" width="1" height="1" fill="#444"/><rect x="14" y="14" width="1" height="1" fill="#444"/><rect x="16" y="14" width="1" height="1" fill="#444"/><rect x="18" y="14" width="1" height="1" fill="#444"/><rect x="20" y="14" width="1" height="1" fill="#444"/><rect x="8" y="18" width="1" height="1" fill="#444"/><rect x="10" y="18" width="1" height="1" fill="#444"/><rect x="12" y="18" width="1" height="1" fill="#444"/><rect x="14" y="18" width="1" height="1" fill="#444"/><rect x="16" y="18" width="1" height="1" fill="#444"/><rect x="18" y="18" width="1" height="1" fill="#444"/><rect x="20" y="18" width="1" height="1" fill="#444"/><rect x="8" y="22" width="1" height="1" fill="#444"/><rect x="10" y="22" width="1" height="1" fill="#444"/><rect x="12" y="22" width="1" height="1" fill="#444"/><rect x="14" y="22" width="1" height="1" fill="#444"/><rect x="16" y="22" width="1" height="1" fill="#444"/><rect x="18" y="22" width="1" height="1" fill="#444"/><rect x="20" y="22" width="1" height="1" fill="#444"/><rect x="8" y="10" width="1" height="1" fill="#444"/><rect x="8" y="12" width="1" height="1" fill="#444"/><rect x="8" y="14" width="1" height="1" fill="#444"/><rect x="8" y="16" width="1" height="1" fill="#444"/><rect x="8" y="18" width="1" height="1" fill="#444"/><rect x="8" y="20" width="1" height="1" fill="#444"/><rect x="8" y="22" width="1" height="1" fill="#444"/><rect x="14" y="10" width="1" height="1" fill="#444"/><rect x="14" y="12" width="1" height="1" fill="#444"/><rect x="14" y="14" width="1" height="1" fill="#444"/><rect x="14" y="16" width="1" height="1" fill="#444"/><rect x="14" y="18" width="1" height="1" fill="#444"/><rect x="14" y="20" width="1" height="1" fill="#444"/><rect x="14" y="22" width="1" height="1" fill="#444"/><rect x="20" y="10" width="1" height="1" fill="#444"/><rect x="20" y="12" width="1" height="1" fill="#444"/><rect x="20" y="14" width="1" height="1" fill="#444"/><rect x="20" y="16" width="1" height="1" fill="#444"/><rect x="20" y="18" width="1" height="1" fill="#444"/><rect x="20" y="20" width="1" height="1" fill="#444"/><rect x="20" y="22" width="1" height="1" fill="#444"/></svg><svg class="a" style="left:41px;top:184.8px" width="24" height="25" viewBox="0 0 24 25"><rect x="0" y="2.100" width="18.200" height="19.700" rx="1.500" fill="#e8bf80"/><rect x="3" y="4.500" width="12.700" height="14.300" fill="#fff"/><path d="M3 5V3.600a1 1 0 0 1 1-1h1.700V2a2 2 0 0 1 2-2h2.700a2 2 0 0 1 2 2v0.600h1.700a1 1 0 0 1 1 1V5z" fill="#6a6a6a"/><rect x="7.900" y="1.100" width="2.500" height="1.500" fill="#fff"/><rect x="6" y="8.5" width="17" height="16" fill="#fff"/><path d="M8.500 12.800h4.200M15.600 12.800h4.200" stroke="#3b78c3" stroke-width="1.400"/>
<path d="M7 12.800l3.200-2.700v5.400zM21.300 12.800l-3.200-2.700v5.400z" fill="#3b78c3"/>
<path d="M8.600 23.500v-6.100h11V23.500" fill="none" stroke="#555" stroke-width="1.300"/></svg><svg class="a" style="left:71px;top:184.8px" width="24" height="25" viewBox="0 0 24 25"><rect x="0" y="2.100" width="18.200" height="19.700" rx="1.500" fill="#e8bf80"/><rect x="3" y="4.500" width="12.700" height="14.300" fill="#fff"/><path d="M3 5V3.600a1 1 0 0 1 1-1h1.700V2a2 2 0 0 1 2-2h2.700a2 2 0 0 1 2 2v0.600h1.700a1 1 0 0 1 1 1V5z" fill="#6a6a6a"/><rect x="7.900" y="1.100" width="2.500" height="1.500" fill="#fff"/><rect x="5" y="8" width="18" height="16.5" fill="#fff"/><rect x="16.600" y="9.500" width="4" height="3.600" fill="#a9c4e2" stroke="#666" stroke-width="0.800"/>
<rect x="16.600" y="13.900" width="4" height="3.600" fill="#fff" stroke="#666" stroke-width="0.800"/>
<rect x="6.500" y="19" width="3.700" height="3.700" fill="#a9c4e2" stroke="#666" stroke-width="0.800"/>
<rect x="11" y="19" width="3.700" height="3.700" fill="#fff" stroke="#666" stroke-width="0.800"/>
<path d="M8.500 15.500c0-3 2-5 5-5" fill="none" stroke="#3b78c3" stroke-width="1.500"/>
<path d="M6 14.700h5l-2.500 3.300zM12.300 8v5l3.300-2.500z" fill="#3b78c3"/></svg><svg class="a" style="left:4px;top:229px" width="38" height="38" viewBox="0 0 38 38"><rect x="2.300" y="2.800" width="31.600" height="31.900" fill="#c5e7d4" stroke="#f2141e" stroke-width="1.700"/></svg><svg class="a" style="left:10.5px;top:237px" width="24" height="25" viewBox="0 0 24 25"><rect x="0" y="2.100" width="18.200" height="19.700" rx="1.500" fill="#e8bf80"/><rect x="3" y="4.500" width="12.700" height="14.300" fill="#c5e7d4"/><path d="M3 5V3.600a1 1 0 0 1 1-1h1.700V2a2 2 0 0 1 2-2h2.700a2 2 0 0 1 2 2v0.600h1.700a1 1 0 0 1 1 1V5z" fill="#6a6a6a"/><rect x="7.900" y="1.100" width="2.500" height="1.500" fill="#c5e7d4"/><rect x="4.5" y="16" width="19.5" height="8" fill="#c5e7d4"/><text x="5.400" y="23.600" font-family="Liberation Sans,sans-serif" font-weight="bold" font-size="9" fill="#333" stroke="none" textLength="15.400" lengthAdjust="spacingAndGlyphs">123</text></svg><svg class="a" style="left:41px;top:237px" width="24" height="25" viewBox="0 0 24 25"><rect x="0" y="2.100" width="18.200" height="19.700" rx="1.500" fill="#e8bf80"/><rect x="3" y="4.500" width="12.700" height="14.300" fill="#fff"/><path d="M3 5V3.600a1 1 0 0 1 1-1h1.700V2a2 2 0 0 1 2-2h2.700a2 2 0 0 1 2 2v0.600h1.700a1 1 0 0 1 1 1V5z" fill="#6a6a6a"/><rect x="7.900" y="1.100" width="2.500" height="1.500" fill="#fff"/><text x="4.300" y="15" font-family="Liberation Sans,sans-serif" font-size="11" fill="#444" textLength="8.800" lengthAdjust="spacingAndGlyphs">%</text><rect x="4.5" y="16" width="19.5" height="8" fill="#fff"/><text x="5.400" y="23.600" font-family="Liberation Sans,sans-serif" font-weight="bold" font-size="9" fill="#333" stroke="none" textLength="15.400" lengthAdjust="spacingAndGlyphs">123</text></svg><svg class="a" style="left:71px;top:237px" width="24" height="25" viewBox="0 0 24 25"><rect x="0" y="2.100" width="18.200" height="19.700" rx="1.500" fill="#e8bf80"/><rect x="3" y="4.500" width="12.700" height="14.300" fill="#fff"/><path d="M3 5V3.600a1 1 0 0 1 1-1h1.700V2a2 2 0 0 1 2-2h2.700a2 2 0 0 1 2 2v0.600h1.700a1 1 0 0 1 1 1V5z" fill="#6a6a6a"/><rect x="7.900" y="1.100" width="2.500" height="1.500" fill="#fff"/><g transform="translate(0.6,-1.2) scale(0.8)"><path d="M21.500 4.500L23 9.500L17 17.500C17 22 11 24.200 1.500 23.700C6 21.500 7 19 8 16.500C9 14.500 10.500 13.500 12.500 13z" fill="#fff"/>
<path d="M21 6L21.400 9.300L15.800 16.300L13 13.800z" fill="#595959"/>
<path d="M12.800 14.600L15.400 17C15.500 20.500 11.500 22.700 3.500 22.700C7 21 8.200 19 9.200 17C10 15.300 11.300 14.400 12.800 14.600z" fill="#3b78c3"/>
<path d="M9.500 19.500c1-1.800 2.200-2.600 3.600-2.400" fill="none" stroke="#cfe0f3" stroke-width="1"/></g><rect x="4.5" y="16" width="19.5" height="8" fill="#fff"/><text x="5.400" y="23.600" font-family="Liberation Sans,sans-serif" font-weight="bold" font-size="9" fill="#333" stroke="none" textLength="15.400" lengthAdjust="spacingAndGlyphs">123</text></svg><svg class="a" style="left:11px;top:290.8px" width="24" height="25" viewBox="0 0 24 25"><rect x="0" y="2.100" width="18.200" height="19.700" rx="1.500" fill="#e8bf80"/><rect x="3" y="4.500" width="12.700" height="14.300" fill="#fff"/><path d="M3 5V3.600a1 1 0 0 1 1-1h1.700V2a2 2 0 0 1 2-2h2.700a2 2 0 0 1 2 2v0.600h1.700a1 1 0 0 1 1 1V5z" fill="#6a6a6a"/><rect x="7.900" y="1.100" width="2.500" height="1.500" fill="#fff"/><text x="5.500" y="11.400" font-family="Liberation Sans,sans-serif" font-weight="bold" font-size="9.500" fill="#444" textLength="7" lengthAdjust="spacingAndGlyphs">%</text><g transform="translate(-2,0) scale(1)"><path d="M21.500 4.500L23 9.500L17 17.500C17 22 11 24.200 1.500 23.700C6 21.500 7 19 8 16.500C9 14.500 10.500 13.500 12.500 13z" fill="#fff"/>
<path d="M21 6L21.400 9.300L15.800 16.300L13 13.800z" fill="#595959"/>
<path d="M12.800 14.600L15.400 17C15.500 20.500 11.500 22.700 3.500 22.700C7 21 8.200 19 9.200 17C10 15.300 11.300 14.400 12.800 14.600z" fill="#3b78c3"/>
<path d="M9.500 19.500c1-1.800 2.200-2.600 3.600-2.400" fill="none" stroke="#cfe0f3" stroke-width="1"/></g></svg><svg class="a" style="left:41px;top:290.8px" width="24" height="25" viewBox="0 0 24 25"><rect x="0" y="2.100" width="18.200" height="19.700" rx="1.500" fill="#e8bf80"/><rect x="3" y="4.500" width="12.700" height="14.300" fill="#fff"/><path d="M3 5V3.600a1 1 0 0 1 1-1h1.700V2a2 2 0 0 1 2-2h2.700a2 2 0 0 1 2 2v0.600h1.700a1 1 0 0 1 1 1V5z" fill="#6a6a6a"/><rect x="7.900" y="1.100" width="2.500" height="1.500" fill="#fff"/><g transform="translate(0,0)">
<rect x="4.800" y="14.700" width="17.400" height="9.700" rx="4.500" fill="#fff"/>
<g fill="none" stroke="#2f68b0" stroke-width="1.700">
<rect x="6.850" y="16.750" width="7.800" height="5.600" rx="2.800"/><rect x="12.350" y="16.750" width="7.800" height="5.600" rx="2.800"/></g></g></svg><svg class="a" style="left:71px;top:290.8px" width="24" height="25" viewBox="0 0 24 25"><rect x="0" y="2.100" width="18.200" height="19.700" rx="1.500" fill="#e8bf80"/><rect x="3" y="4.500" width="12.700" height="14.300" fill="#fff"/><path d="M3 5V3.600a1 1 0 0 1 1-1h1.700V2a2 2 0 0 1 2-2h2.700a2 2 0 0 1 2 2v0.600h1.700a1 1 0 0 1 1 1V5z" fill="#6a6a6a"/><rect x="7.900" y="1.100" width="2.500" height="1.500" fill="#fff"/><rect x="7.5" y="9.8" width="14.5" height="14" fill="#fff"/>
<rect x="9.0" y="11.3" width="11.5" height="11" fill="#fff" stroke="#666"/>
<path d="M10.5 20.8l3-4.500l2 2.500l1.500-1.500l2 3.500z" fill="#3b78c3"/>
<circle cx="17.5" cy="14.3" r="1.200" fill="#e8a04a"/></svg><svg class="a" style="left:101.5px;top:290.8px" width="24" height="25" viewBox="0 0 24 25"><rect x="0" y="2.100" width="18.200" height="19.700" rx="1.500" fill="#e8bf80"/><rect x="3" y="4.500" width="12.700" height="14.300" fill="#fff"/><path d="M3 5V3.600a1 1 0 0 1 1-1h1.700V2a2 2 0 0 1 2-2h2.700a2 2 0 0 1 2 2v0.600h1.700a1 1 0 0 1 1 1V5z" fill="#6a6a6a"/><rect x="7.900" y="1.100" width="2.500" height="1.500" fill="#fff"/><rect x="6.9" y="5.6" width="14.2" height="13.8" fill="#fff"/>
<rect x="8.4" y="7.1" width="11.2" height="10.8" fill="#fff" stroke="#666"/>
<path d="M9.9 16.4l3-4.500l2 2.500l1.500-1.500l2 3.500z" fill="#3b78c3"/>
<circle cx="16.6" cy="10.1" r="1.200" fill="#e8a04a"/><g transform="translate(-2,0)">
<rect x="4.800" y="14.700" width="17.400" height="9.700" rx="4.500" fill="#fff"/>
<g fill="none" stroke="#2f68b0" stroke-width="1.700">
<rect x="6.850" y="16.750" width="7.800" height="5.600" rx="2.800"/><rect x="12.350" y="16.750" width="7.800" height="5.600" rx="2.800"/></g></g></svg><div class="a" style="left:6px;top:318px;width:200px;height:1px;background:#e1e1e1"></div><div class="t" style='left:36px;top:323.2px;font-size:12.5px;line-height:16.5px;color:#444;font-weight:normal;font-family:"Liberation Sans","Noto Sans CJK JP",sans-serif;transform:scaleX(0.889);transform-origin:0 50%;'>形式を選択して貼り付け(S)...</div><div class="a" style="left:160.500px;top:338px;width:7px;height:1px;background:#444"></div><svg class="a" style="left:20px;top:124px" width="12" height="88" viewBox="0 0 12 88"><path d="M5.600 0.500V87" stroke="#f00" stroke-width="1.700"/></svg><svg class="a" style="left:20px;top:207px" width="12" height="12" viewBox="0 0 12 12"><path d="M0 0h12L6 12z" fill="#f00"/></svg><div class="a" style="left:6px;top:276px;width:43px;height:24px;background:#fff;border:1px solid #bdbdbd;box-shadow:1px 1px 3px rgba(0,0,0,0.3)"></div><div class="t" style='left:10.2px;top:280.8px;font-size:13px;line-height:17px;color:#666;font-weight:normal;font-family:"Liberation Sans","Noto Sans CJK JP",sans-serif;transform:scaleX(0.984);transform-origin:0 50%;'>値 (V)</div><svg class="a" style="left:21px;top:263px" width="14" height="20" viewBox="0 0 14 20"><path d="M1.500 0.800v16l3.800-3.600l2.800 6.300l2.300-1l-2.800-6.100h5.200z" fill="#fff" stroke="#222" stroke-width="1"/></svg>
</body></html>
